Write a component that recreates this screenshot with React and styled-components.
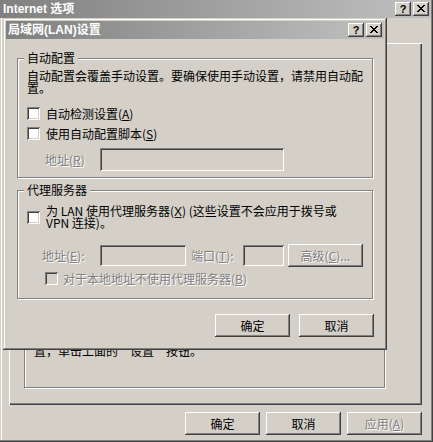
import React from 'react';
import styled, { createGlobalStyle, css } from 'styled-components';

const FACE = '#d4d0c8';

const Global = createGlobalStyle`
  html, body { margin: 0; padding: 0; background: ${FACE}; }
  body {
    font-family: "Noto Sans CJK SC", "Liberation Sans", sans-serif;
    font-size: 12px;
    color: #000;
  }
`;

const raised = css`
  box-shadow: inset -1px -1px #404040, inset 1px 1px #fff, inset -2px -2px #808080, inset 2px 2px ${FACE};
`;
const sunken = css`
  box-shadow: inset 1px 1px #808080, inset -1px -1px #fff, inset 2px 2px #404040, inset -2px -2px ${FACE};
`;
const etched = css`
  border: 1px solid #808080;
  box-shadow: 1px 1px 0 #fff, inset 1px 1px 0 #fff;
`;
const disabledText = css`
  color: #808080;
  text-shadow: 1px 1px 0 #fff;
`;

const Window = styled.div`
  position: relative;
  width: 433px;
  height: 442px;
  box-sizing: border-box;
  background: ${FACE};
  display: flex;
  flex-direction: column;
  box-shadow: inset -1px -1px #404040, inset -2px -2px #808080, inset 1px 0 ${FACE}, inset 2px 0 #fff;
  overflow: hidden;
`;

const TitleBar = styled.div`
  display: flex;
  align-items: center;
  justify-content: space-between;
  height: 18px;
  flex: 0 0 18px;
  box-sizing: border-box;
  padding: 0 2px 0 ${(p) => p.$padLeft}px;
  margin-right: ${(p) => p.$mr}px;
  background: linear-gradient(to right, #808080, #c0c0c0);
`;

const TitleText = styled.span`
  color: #fff;
  font-weight: bold;
  font-size: 12px;
  line-height: 18px;
  white-space: nowrap;
  font-family: "Liberation Sans", "Noto Sans CJK SC", sans-serif;
`;

const TitleButtons = styled.div`
  display: flex;
  gap: 2px;
`;

const TitleButton = styled.div`
  width: 16px;
  height: 14px;
  box-sizing: border-box;
  background: ${FACE};
  ${raised};
  display: flex;
  align-items: center;
  justify-content: center;
  font-family: "Liberation Sans", sans-serif;
  font-weight: bold;
  font-size: 11px;
  line-height: 14px;
  color: #000;
  padding-bottom: 1px;
`;

const CloseGlyph = () => (
  <svg width="8" height="7" viewBox="0 0 8 7" shapeRendering="crispEdges">
    {[
      [0, 0], [1, 0], [6, 0], [7, 0],
      [1, 1], [2, 1], [5, 1], [6, 1],
      [2, 2], [3, 2], [4, 2], [5, 2],
      [3, 3], [4, 3],
      [2, 4], [3, 4], [4, 4], [5, 4],
      [1, 5], [2, 5], [5, 5], [6, 5],
      [0, 6], [1, 6], [6, 6], [7, 6],
    ].map(([x, y]) => (
      <rect key={`${x}-${y}`} x={x} y={y} width="1" height="1" fill="#000" />
    ))}
  </svg>
);

const Caption = ({ title, padLeft, mr }) => (
  <TitleBar $padLeft={padLeft} $mr={mr}>
    <TitleText>{title}</TitleText>
    <TitleButtons>
      <TitleButton>?</TitleButton>
      <TitleButton><CloseGlyph /></TitleButton>
    </TitleButtons>
  </TitleBar>
);

const TabPanel = styled.div`
  margin: 25px 11px 0 9px;
  height: 362px;
  flex: 0 0 362px;
  box-sizing: border-box;
  padding: 0 37px 17px 15px;
  display: flex;
  flex-direction: column;
  justify-content: flex-end;
  box-shadow: inset 1px 1px #fff, inset -1px -1px #404040, inset -2px -2px #808080;
`;

const InnerGroup = styled.div`
  ${etched};
  height: 100px;
  box-sizing: border-box;
  display: flex;
  flex-direction: column;
  justify-content: flex-end;
  padding: 0 9px 30px 9px;
`;

const Text = styled.div`
  line-height: 12px;
  white-space: ${(p) => (p.$w ? 'normal' : 'nowrap')};
  width: ${(p) => (p.$w ? `${p.$w}px` : 'auto')};
  margin-top: ${(p) => p.$mt || 0}px;
`;

const ButtonRow = styled.div`
  display: flex;
  justify-content: flex-end;
  gap: ${(p) => p.$gap}px;
  margin: ${(p) => p.$mt}px ${(p) => p.$mr}px 0 0;
`;

const PushButton = styled.div`
  width: 75px;
  height: 23px;
  box-sizing: border-box;
  background: ${FACE};
  ${raised};
  display: flex;
  align-items: center;
  justify-content: center;
  line-height: 12px;
  white-space: nowrap;
  margin-left: ${(p) => p.$ml || 0}px;
  ${(p) => p.$disabled && disabledText};
`;

const Dialog = styled.div`
  position: absolute;
  left: 3px;
  top: 18px;
  width: 384px;
  height: 332px;
  box-sizing: border-box;
  padding: 3px;
  background: ${FACE};
  display: flex;
  flex-direction: column;
  box-shadow: inset -1px -1px #404040, inset 1px 1px ${FACE}, inset -2px -2px #808080, inset 2px 2px #fff;
`;

const DialogBody = styled.div`
  padding: 19px 11px 0 11px;
  display: flex;
  flex-direction: column;
`;

const Group = styled.div`
  ${etched};
  height: ${(p) => p.$h}px;
  box-sizing: border-box;
  margin-top: ${(p) => p.$mt || 0}px;
  padding: 0 9px;
  display: flex;
  flex-direction: column;
  align-items: flex-start;
`;

const Legend = styled.div`
  margin: -7px 0 0 -3px;
  padding: 0 3px;
  background: ${FACE};
  line-height: 12px;
  white-space: nowrap;
`;

const CheckRow = styled.div`
  display: flex;
  align-items: center;
  gap: ${(p) => p.$gap || 6}px;
  margin-top: ${(p) => p.$mt || 0}px;
  margin-left: ${(p) => p.$ml || 0}px;
`;

const CheckBox = styled.div`
  width: 13px;
  height: 13px;
  flex: 0 0 13px;
  box-sizing: border-box;
  background: ${(p) => (p.$disabled ? FACE : '#fff')};
  ${sunken};
`;

const Label = styled.div`
  line-height: 12px;
  white-space: ${(p) => (p.$w ? 'normal' : 'nowrap')};
  width: ${(p) => (p.$w ? `${p.$w}px` : 'auto')};
  ${(p) => p.$disabled && disabledText};
`;

const FieldRow = styled.div`
  display: flex;
  align-items: center;
  margin-top: ${(p) => p.$mt}px;
  margin-left: ${(p) => p.$ml || 0}px;
`;

const FieldLabel = styled.div`
  width: ${(p) => p.$w}px;
  flex: 0 0 ${(p) => p.$w}px;
  margin-left: ${(p) => p.$ml || 0}px;
  line-height: 12px;
  white-space: nowrap;
  ${disabledText};
`;

const Edit = styled.div`
  width: ${(p) => p.$w}px;
  height: ${(p) => p.$h}px;
  flex: 0 0 ${(p) => p.$w}px;
  box-sizing: border-box;
  background: ${FACE};
  ${sunken};
`;

export default function App() {
  return (
    <>
      <Global />
      <Window>
        <Caption title="Internet 选项" padLeft={3} mr={2} />
        <TabPanel>
          <InnerGroup>
            <Text>置，单击上面的“设置”按钮。</Text>
          </InnerGroup>
        </TabPanel>
        <ButtonRow $gap={6} $mt={7} $mr={11}>
          <PushButton>确定</PushButton>
          <PushButton>取消</PushButton>
          <PushButton $disabled>应用(<u>A</u>)</PushButton>
        </ButtonRow>

        <Dialog>
          <Caption title="局域网(LAN)设置" padLeft={2} mr={0} />
          <DialogBody>
            <Group $h={120}>
              <Legend>自动配置</Legend>
              <Text $mt={6} $w={340}>自动配置会覆盖手动设置。要确保使用手动设置，请禁用自动配置。</Text>
              <CheckRow $mt={13}>
                <CheckBox />
                <Label>自动检测设置(<u>A</u>)</Label>
              </CheckRow>
              <CheckRow $mt={7}>
                <CheckBox />
                <Label>使用自动配置脚本(<u>S</u>)</Label>
              </CheckRow>
              <FieldRow $mt={8} $ml={18}>
                <FieldLabel $w={55}>地址(<u>R</u>)</FieldLabel>
                <Edit $w={184} $h={23} />
              </FieldRow>
            </Group>

            <Group $h={109} $mt={12}>
              <Legend>代理服务器</Legend>
              <CheckRow $mt={9}>
                <CheckBox />
                <Label $w={300}>{'为 LAN 使用代理服务器(X\u0332) (这些设置不会应用于拨号或 VPN 连接)。'}</Label>
              </CheckRow>
              <FieldRow $mt={15} $ml={15}>
                <FieldLabel $w={58}>地址(<u>E</u>):</FieldLabel>
                <Edit $w={86} $h={21} />
                <FieldLabel $w={52} $ml={5}>端口(<u>T</u>):</FieldLabel>
                <Edit $w={41} $h={21} />
                <PushButton $disabled $ml={4}>高级(<u>C</u>)...</PushButton>
              </FieldRow>
              <CheckRow $mt={5} $ml={18} $gap={5}>
                <CheckBox $disabled />
                <Label $disabled>对于本地地址不使用代理服务器(<u>B</u>)</Label>
              </CheckRow>
            </Group>

            <ButtonRow $gap={9} $mt={15} $mr={-1}>
              <PushButton>确定</PushButton>
              <PushButton>取消</PushButton>
            </ButtonRow>
          </DialogBody>
        </Dialog>
      </Window>
    </>
  );
}
